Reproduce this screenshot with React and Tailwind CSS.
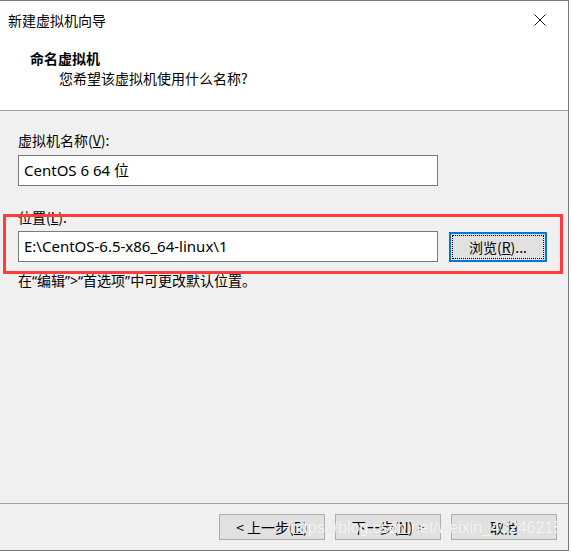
import React from 'react'

const cjk = { fontFamily: '"Noto Sans CJK SC", "Noto Sans", sans-serif' }
const latin = { fontFamily: '"Noto Sans", "Noto Sans CJK SC", sans-serif' }

function Btn ({ children, className = '' }) {
  return (
    <button className={'h-[26px] w-[106px] border border-[#adadad] bg-[#e1e1e1] text-[14px] leading-none text-black ' + className} style={cjk}>
      {children}
    </button>
  )
}

function Q ({ children }) {
  return <span style={latin}>{children}</span>
}

export default function App () {
  return (
    <div className="relative h-[556px] w-[572px] overflow-hidden bg-white">
      <div className="flex h-[551px] w-[569px] flex-col border-t border-r border-b border-[#7a7a7a] bg-[#f0f0f0]">
        {/* header */}
        <div className="h-[109px] bg-white">
          <div className="flex h-[39px] items-center justify-between pl-[8px] pr-[22px]">
            <span className="text-[14px] text-black" style={cjk}>新建虚拟机向导</span>
            <svg width="12" height="12" viewBox="0 0 12 12" className="mt-[-1px]">
              <path d="M0.5 0.5 L11.5 11.5 M11.5 0.5 L0.5 11.5" stroke="#111" strokeWidth="1" />
            </svg>
          </div>
          <div className="pl-[30px] pt-[8px] text-[14px] font-bold leading-[20px] text-black" style={cjk}>命名虚拟机</div>
          <div className="pl-[59px] text-[14px] leading-[20px] text-black" style={cjk}>您希望该虚拟机使用什么名称?</div>
        </div>
        <div className="h-px bg-[#a0a0a0]" />

        {/* body */}
        <div className="flex-1 pl-[18px]">
          <div className="mt-[20px] text-[14px] leading-[18px] text-black" style={cjk}>虚拟机名称(<span className="underline">V</span>):</div>
          <div className="mt-[6px] flex h-[31px] w-[420px] items-center border border-[#7a7a7a] bg-white pl-[5px] text-[15px] text-black" style={latin}>CentOS 6 64 位</div>

          <div className="mt-[22px] text-[14px] leading-[18px] text-black" style={cjk}>位置(<span className="underline">L</span>):</div>
          <div className="mt-[5px] flex items-start gap-[11px]">
            <div className="flex h-[31px] w-[420px] items-center border border-[#7a7a7a] bg-white pl-[5px] text-[15px] text-black" style={latin}>E:\CentOS-6.5-x86_64-linux\1</div>
            <button className="mt-px flex h-[30px] w-[98px] items-center justify-center border-2 border-[#0078d7] bg-[#e1e1e1] p-px" style={cjk}>
              <span className="flex h-full w-full items-center justify-center border border-dotted border-black text-[14px] text-black">
                浏览(<span className="underline">R</span>)...
              </span>
            </button>
          </div>
          <div className="mt-[9px] text-[14px] leading-[18px] text-black" style={cjk}>
            在<Q>“</Q>编辑<Q>”&gt;“</Q>首选项<Q>”</Q>中可更改默认位置。
          </div>
        </div>

        {/* footer */}
        <div className="h-px bg-[#a0a0a0]" />
        <div className="flex h-[46px] justify-end gap-[10px] pr-[11px] pt-[10px]">
          <Btn>&lt; 上一步(<span className="underline">B</span>)</Btn>
          <Btn>下一步(<span className="underline">N</span>) &gt;</Btn>
          <Btn>取消</Btn>
        </div>
      </div>

      {/* red annotation box */}
      <div className="pointer-events-none absolute left-[3px] top-[214px] h-[60px] w-[560px] border-[3px] border-[#ff3b3b]" />

      {/* watermark */}
      <div
        className="pointer-events-none absolute left-[290px] top-[518px] text-[16px] leading-[20px] text-white/80 [text-shadow:0_0_1px_#c8c8c8]"
        style={{ fontFamily: '"Liberation Sans", Arial, sans-serif' }}
      >
        https://blog.csdn.net/weixin_43246215
      </div>
    </div>
  )
}
